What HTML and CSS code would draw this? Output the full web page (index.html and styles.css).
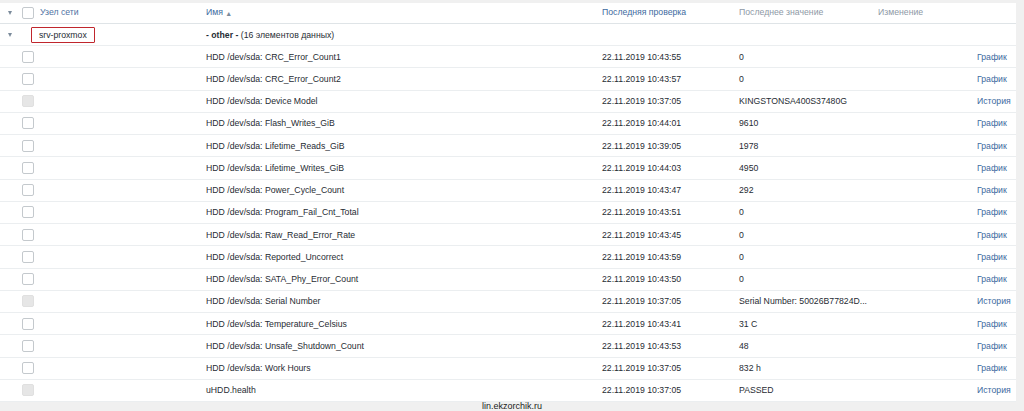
FILE: index.html
```html
<!DOCTYPE html>
<html lang="ru">
<head>
<meta charset="utf-8">
<link rel="stylesheet" href="styles.css">
</head>
<body>
<div class="panel">
  <div class="row head">
    <div class="c-tog"><span class="tri"></span></div>
    <div class="c-chk"><span class="cb"></span></div>
    <div class="c-host"><span class="hl">Узел сети</span></div>
    <div class="c-name"><span class="lnk">Имя</span> <span class="arr">▲</span></div>
    <div class="c-time"><span class="lnk">Последняя проверка</span></div>
    <div class="c-val muted">Последнее значение</div>
    <div class="c-chg muted">Изменение</div>
    <div class="c-act"></div>
  </div>
  <div class="row group">
    <div class="c-tog"><span class="tri"></span></div>
    <div class="c-chk"></div>
    <div class="c-host"><span class="host">srv-proxmox</span></div>
    <div class="c-name"><b>- other -</b> (16 элементов данных)</div>
  </div>
  <div class="row"><div class="c-tog"></div><div class="c-chk"><span class="cb"></span></div><div class="c-host"></div><div class="c-name">HDD /dev/sda: CRC_Error_Count1</div><div class="c-time">22.11.2019 10:43:55</div><div class="c-val">0</div><div class="c-chg"></div><div class="c-act"><span class="lnk">График</span></div></div>
  <div class="row"><div class="c-tog"></div><div class="c-chk"><span class="cb"></span></div><div class="c-host"></div><div class="c-name">HDD /dev/sda: CRC_Error_Count2</div><div class="c-time">22.11.2019 10:43:57</div><div class="c-val">0</div><div class="c-chg"></div><div class="c-act"><span class="lnk">График</span></div></div>
  <div class="row"><div class="c-tog"></div><div class="c-chk"><span class="cb dis"></span></div><div class="c-host"></div><div class="c-name">HDD /dev/sda: Device Model</div><div class="c-time">22.11.2019 10:37:05</div><div class="c-val">KINGSTONSA400S37480G</div><div class="c-chg"></div><div class="c-act"><span class="lnk">История</span></div></div>
  <div class="row"><div class="c-tog"></div><div class="c-chk"><span class="cb"></span></div><div class="c-host"></div><div class="c-name">HDD /dev/sda: Flash_Writes_GiB</div><div class="c-time">22.11.2019 10:44:01</div><div class="c-val">9610</div><div class="c-chg"></div><div class="c-act"><span class="lnk">График</span></div></div>
  <div class="row"><div class="c-tog"></div><div class="c-chk"><span class="cb"></span></div><div class="c-host"></div><div class="c-name">HDD /dev/sda: Lifetime_Reads_GiB</div><div class="c-time">22.11.2019 10:39:05</div><div class="c-val">1978</div><div class="c-chg"></div><div class="c-act"><span class="lnk">График</span></div></div>
  <div class="row"><div class="c-tog"></div><div class="c-chk"><span class="cb"></span></div><div class="c-host"></div><div class="c-name">HDD /dev/sda: Lifetime_Writes_GiB</div><div class="c-time">22.11.2019 10:44:03</div><div class="c-val">4950</div><div class="c-chg"></div><div class="c-act"><span class="lnk">График</span></div></div>
  <div class="row"><div class="c-tog"></div><div class="c-chk"><span class="cb"></span></div><div class="c-host"></div><div class="c-name">HDD /dev/sda: Power_Cycle_Count</div><div class="c-time">22.11.2019 10:43:47</div><div class="c-val">292</div><div class="c-chg"></div><div class="c-act"><span class="lnk">График</span></div></div>
  <div class="row"><div class="c-tog"></div><div class="c-chk"><span class="cb"></span></div><div class="c-host"></div><div class="c-name">HDD /dev/sda: Program_Fail_Cnt_Total</div><div class="c-time">22.11.2019 10:43:51</div><div class="c-val">0</div><div class="c-chg"></div><div class="c-act"><span class="lnk">График</span></div></div>
  <div class="row"><div class="c-tog"></div><div class="c-chk"><span class="cb"></span></div><div class="c-host"></div><div class="c-name">HDD /dev/sda: Raw_Read_Error_Rate</div><div class="c-time">22.11.2019 10:43:45</div><div class="c-val">0</div><div class="c-chg"></div><div class="c-act"><span class="lnk">График</span></div></div>
  <div class="row"><div class="c-tog"></div><div class="c-chk"><span class="cb"></span></div><div class="c-host"></div><div class="c-name">HDD /dev/sda: Reported_Uncorrect</div><div class="c-time">22.11.2019 10:43:59</div><div class="c-val">0</div><div class="c-chg"></div><div class="c-act"><span class="lnk">График</span></div></div>
  <div class="row"><div class="c-tog"></div><div class="c-chk"><span class="cb"></span></div><div class="c-host"></div><div class="c-name">HDD /dev/sda: SATA_Phy_Error_Count</div><div class="c-time">22.11.2019 10:43:50</div><div class="c-val">0</div><div class="c-chg"></div><div class="c-act"><span class="lnk">График</span></div></div>
  <div class="row"><div class="c-tog"></div><div class="c-chk"><span class="cb dis"></span></div><div class="c-host"></div><div class="c-name">HDD /dev/sda: Serial Number</div><div class="c-time">22.11.2019 10:37:05</div><div class="c-val">Serial Number: 50026B77824D...</div><div class="c-chg"></div><div class="c-act"><span class="lnk">История</span></div></div>
  <div class="row"><div class="c-tog"></div><div class="c-chk"><span class="cb"></span></div><div class="c-host"></div><div class="c-name">HDD /dev/sda: Temperature_Celsius</div><div class="c-time">22.11.2019 10:43:41</div><div class="c-val">31 C</div><div class="c-chg"></div><div class="c-act"><span class="lnk">График</span></div></div>
  <div class="row"><div class="c-tog"></div><div class="c-chk"><span class="cb"></span></div><div class="c-host"></div><div class="c-name">HDD /dev/sda: Unsafe_Shutdown_Count</div><div class="c-time">22.11.2019 10:43:53</div><div class="c-val">48</div><div class="c-chg"></div><div class="c-act"><span class="lnk">График</span></div></div>
  <div class="row"><div class="c-tog"></div><div class="c-chk"><span class="cb"></span></div><div class="c-host"></div><div class="c-name">HDD /dev/sda: Work Hours</div><div class="c-time">22.11.2019 10:37:05</div><div class="c-val">832 h</div><div class="c-chg"></div><div class="c-act"><span class="lnk">График</span></div></div>
  <div class="row"><div class="c-tog"></div><div class="c-chk"><span class="cb dis"></span></div><div class="c-host"></div><div class="c-name">uHDD.health</div><div class="c-time">22.11.2019 10:37:05</div><div class="c-val">PASSED</div><div class="c-chg"></div><div class="c-act"><span class="lnk">История</span></div></div>
</div>
<div class="footer">lin.ekzorchik.ru</div>
</body>
</html>
```
FILE: styles.css
```css
html, body {
  margin: 0;
  padding: 0;
  background: #f0f0f0;
  height: 411px;
  overflow: hidden;
}
body {
  font-family: "Liberation Sans", Arial, sans-serif;
  font-size: 8.7px;
  color: #1f2c33;
}
.panel {
  margin-top: 3px;
  width: 1016px;
  background: #fff;
}
.row {
  display: flex;
  align-items: center;
  height: 21.25px;
  border-bottom: 1px solid #ebeef0;
  white-space: nowrap;
}
.row > div { flex-shrink: 0; }
.row.head {
  height: 20px;
  border-bottom: 1px solid #dfe4e7;
}
.row.head .hl, .row.head .lnk, .row.head .muted { position: relative; top: -1px; }
.row.group {
  height: 21px;
}
.c-tog { width: 18px; display: flex; justify-content: center; padding-left: 1px; }
.c-chk { width: 21px; display: flex; align-items: center; }
.c-host { width: 166px; }
.c-name { width: 396px; }
.c-time { width: 137px; }
.c-val { width: 139px; }
.c-chg { width: 99px; }
.row > .c-act { flex: 1 1 auto; text-align: left; }
.tri {
  width: 0; height: 0;
  border-left: 2.5px solid transparent;
  border-right: 2.5px solid transparent;
  border-top: 4px solid #7b8b9b;
  display: block;
}
.cb {
  display: block;
  width: 10px; height: 10px;
  border: 1px solid #c4c9cd;
  border-radius: 2px;
  background: #fff;
  margin-left: 3px;
}
.cb.dis {
  background: #e6e6e6;
  border-color: #e0e0e0;
}
.hl { color: #4f72a3; }
.lnk { color: #3d6aa0; }
.arr { color: #7b8b9b; font-size: 7px; }
.muted { color: #8e99a6; }
.host {
  display: inline-block;
  border: 1.5px solid #c0262d;
  border-radius: 1px;
  padding: 2px 7px 2px 7px;
  margin-left: -9px;
}
.footer {
  text-align: center;
  padding-left: 0;
  margin-top: -1px;
  font-size: 9px;
  color: #222;
  line-height: 10px;
}
```
